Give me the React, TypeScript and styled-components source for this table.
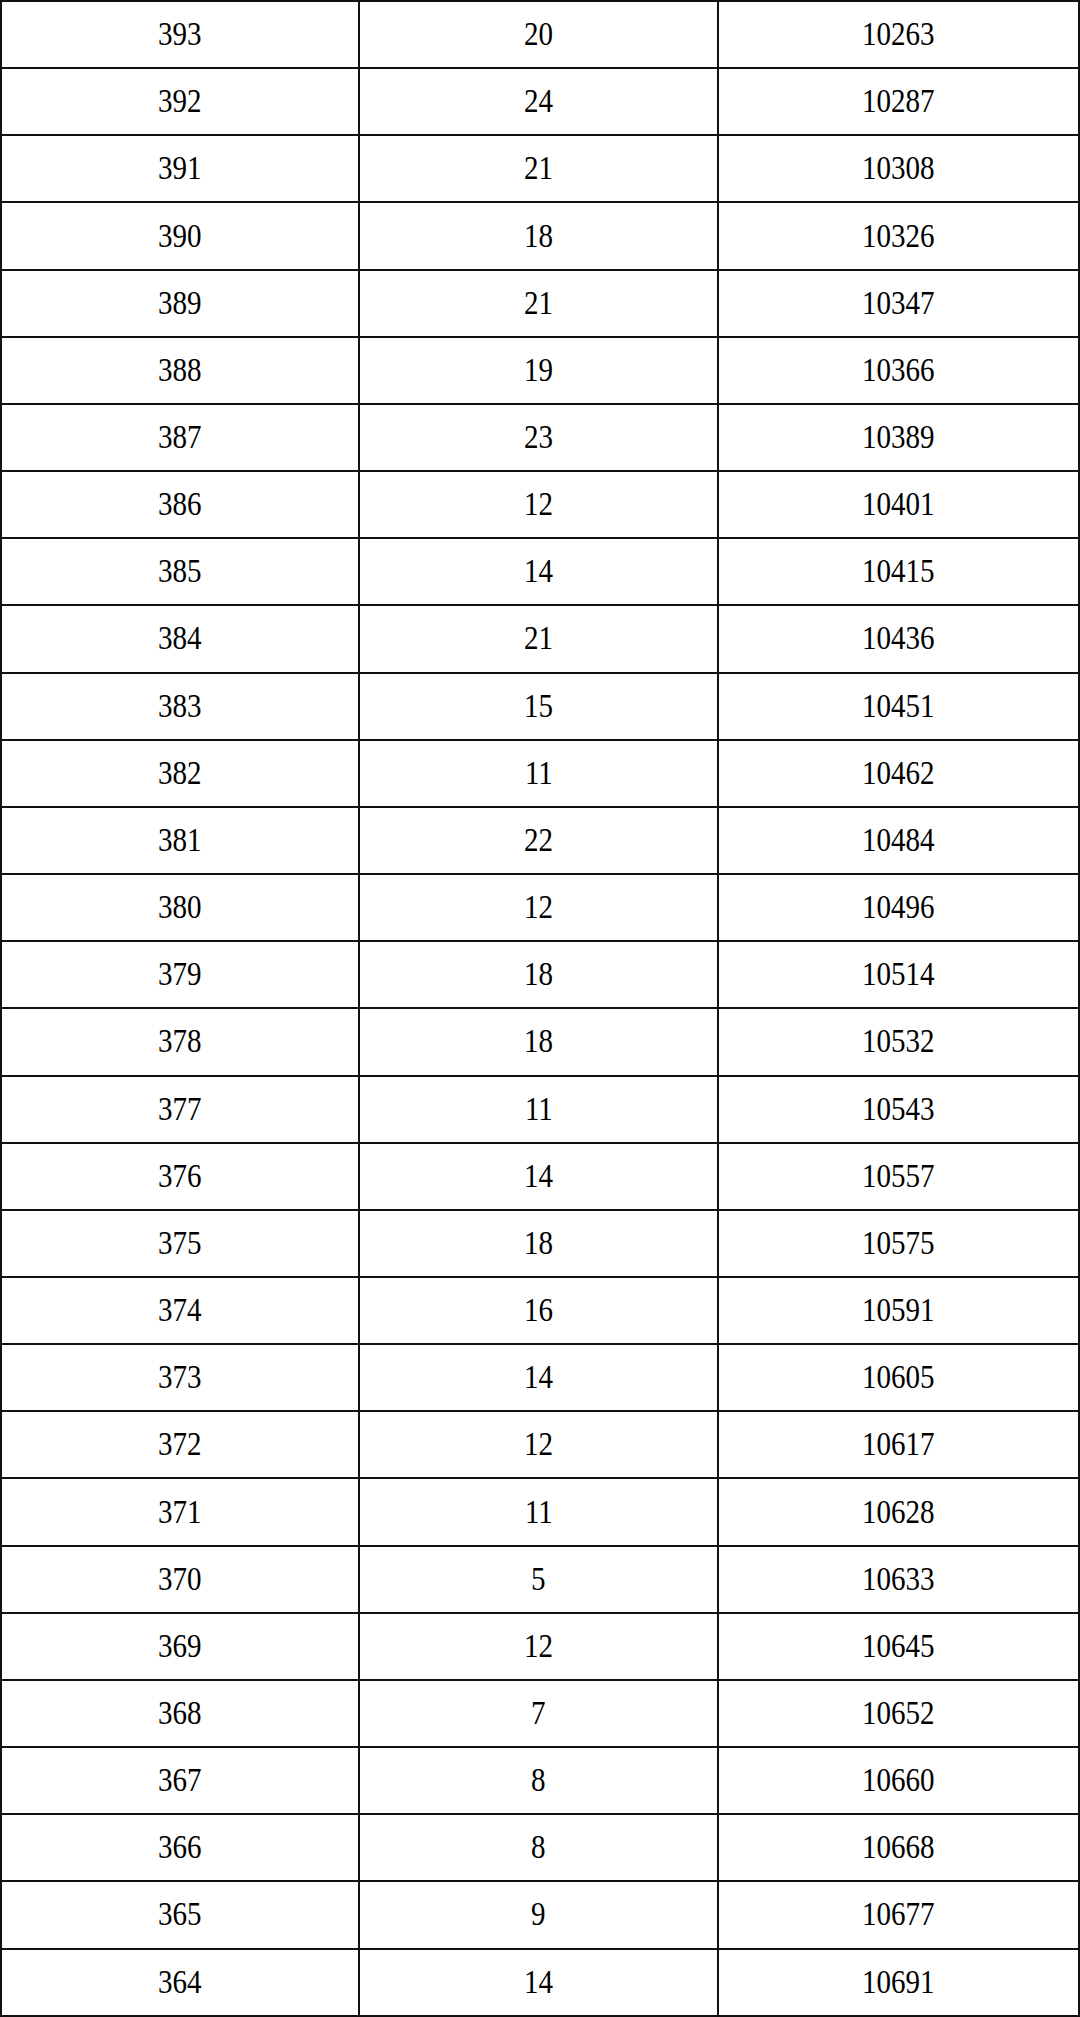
import React from 'react';
import styled, { createGlobalStyle } from 'styled-components';

const GlobalStyle = createGlobalStyle`
  html, body {
    margin: 0;
    padding: 0;
    background: #fff;
    overflow: hidden;
  }
`;

const Table = styled.table`
  width: 1080px;
  height: 2017px;
  box-sizing: border-box;
  border-collapse: separate;
  border-spacing: 0;
  border-top: 2px solid #111;
  border-left: 2px solid #111;
  table-layout: fixed;
  font-family: "Liberation Serif", "Noto Sans CJK SC", serif;
  font-size: 33px;
  color: #000;
`;

const Cell = styled.td`
  border-right: 2px solid #111;
  border-bottom: 2px solid #111;
  text-align: center;
  vertical-align: middle;
  padding: 0;
`;

const Num = styled.span`
  display: inline-block;
  transform: scaleX(0.88);
`;

const Col = styled.col<{ $w: number }>`
  width: ${(p) => p.$w}px;
`;

const rows: [number, number, number][] = [
  [393, 20, 10263], [392, 24, 10287], [391, 21, 10308], [390, 18, 10326],
  [389, 21, 10347], [388, 19, 10366], [387, 23, 10389], [386, 12, 10401],
  [385, 14, 10415], [384, 21, 10436], [383, 15, 10451], [382, 11, 10462],
  [381, 22, 10484], [380, 12, 10496], [379, 18, 10514], [378, 18, 10532],
  [377, 11, 10543], [376, 14, 10557], [375, 18, 10575], [374, 16, 10591],
  [373, 14, 10605], [372, 12, 10617], [371, 11, 10628], [370, 5, 10633],
  [369, 12, 10645], [368, 7, 10652], [367, 8, 10660], [366, 8, 10668],
  [365, 9, 10677], [364, 14, 10691],
];

const App: React.FC = () => (
  <>
    <GlobalStyle />
    <Table>
      <colgroup>
        <Col $w={358} />
        <Col $w={359} />
        <Col $w={361} />
      </colgroup>
      <tbody>
        {rows.map(([score, count, total]) => (
          <tr key={score}>
            <Cell><Num>{score}</Num></Cell>
            <Cell><Num>{count}</Num></Cell>
            <Cell><Num>{total}</Num></Cell>
          </tr>
        ))}
      </tbody>
    </Table>
  </>
);

export default App;
